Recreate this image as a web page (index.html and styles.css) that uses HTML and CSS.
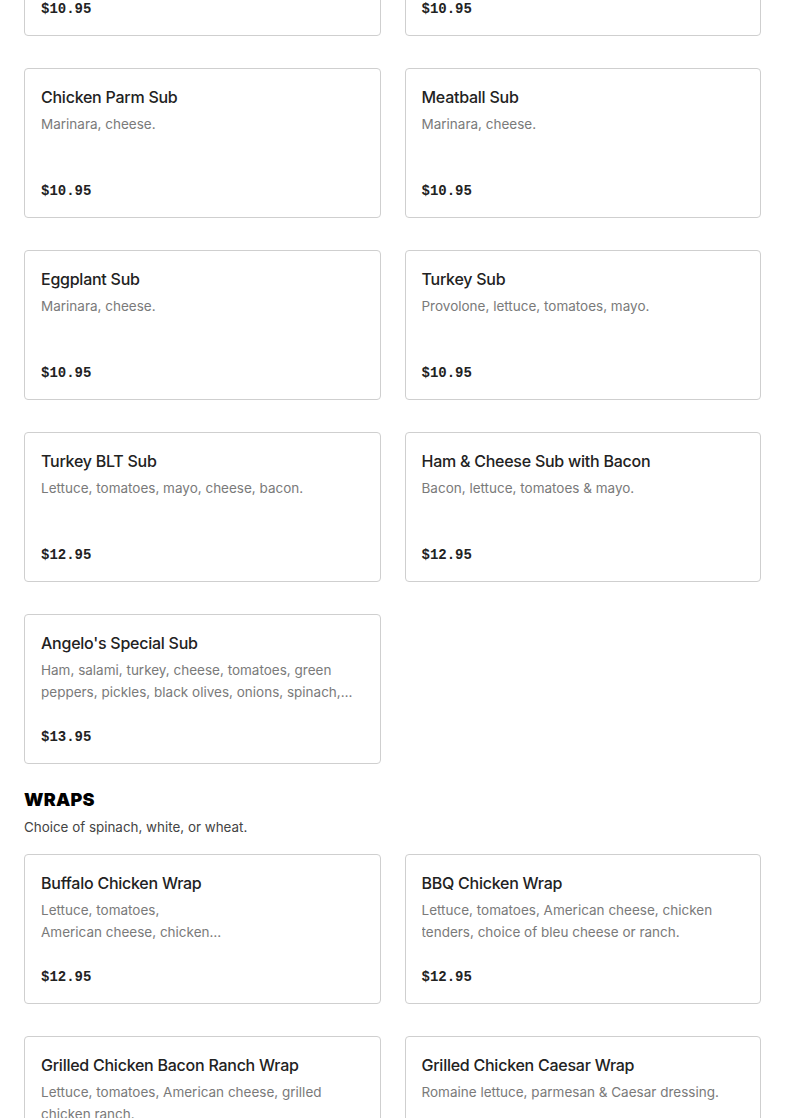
FILE: index.html
```html
<!DOCTYPE html>
<html lang="en">
<head>
<meta charset="utf-8">
<title>Menu</title>
<link rel="stylesheet" href="styles.css">
</head>
<body>
<main class="page">
  <section class="section section-subs">
    <div class="grid">
      <div class="card">
        <h3 class="card-title">Italian Sub</h3>
        <p class="card-desc">Ham, salami, provolone, lettuce, tomatoes, onions, oil &amp; vinegar.</p>
        <div class="card-price">$10.95</div>
      </div>
      <div class="card">
        <h3 class="card-title">Ham &amp; Cheese Sub</h3>
        <p class="card-desc">Lettuce, tomatoes, mayo.</p>
        <div class="card-price">$10.95</div>
      </div>
      <div class="card">
        <h3 class="card-title">Chicken Parm Sub</h3>
        <p class="card-desc">Marinara, cheese.</p>
        <div class="card-price">$10.95</div>
      </div>
      <div class="card">
        <h3 class="card-title">Meatball Sub</h3>
        <p class="card-desc">Marinara, cheese.</p>
        <div class="card-price">$10.95</div>
      </div>
      <div class="card">
        <h3 class="card-title">Eggplant Sub</h3>
        <p class="card-desc">Marinara, cheese.</p>
        <div class="card-price">$10.95</div>
      </div>
      <div class="card">
        <h3 class="card-title">Turkey Sub</h3>
        <p class="card-desc">Provolone, lettuce, tomatoes, mayo.</p>
        <div class="card-price">$10.95</div>
      </div>
      <div class="card">
        <h3 class="card-title">Turkey BLT Sub</h3>
        <p class="card-desc">Lettuce, tomatoes, mayo, cheese, bacon.</p>
        <div class="card-price">$12.95</div>
      </div>
      <div class="card">
        <h3 class="card-title">Ham &amp; Cheese Sub with Bacon</h3>
        <p class="card-desc">Bacon, lettuce, tomatoes &amp; mayo.</p>
        <div class="card-price">$12.95</div>
      </div>
      <div class="card">
        <h3 class="card-title">Angelo's Special Sub</h3>
        <p class="card-desc">Ham, salami, turkey, cheese, tomatoes, green peppers, pickles, black olives, onions, spinach, mushrooms, oil &amp; vinegar.</p>
        <div class="card-price">$13.95</div>
      </div>
    </div>
  </section>

  <section class="section section-wraps">
    <h2 class="section-title">WRAPS</h2>
    <p class="section-sub">Choice of spinach, white, or wheat.</p>
    <div class="grid">
      <div class="card">
        <h3 class="card-title">Buffalo Chicken Wrap</h3>
        <p class="card-desc">Lettuce, tomatoes,<br>American cheese, chicken…</p>
        <div class="card-price">$12.95</div>
      </div>
      <div class="card">
        <h3 class="card-title">BBQ Chicken Wrap</h3>
        <p class="card-desc">Lettuce, tomatoes, American cheese, chicken tenders, choice of bleu cheese or ranch.</p>
        <div class="card-price">$12.95</div>
      </div>
      <div class="card">
        <h3 class="card-title">Grilled Chicken Bacon Ranch Wrap</h3>
        <p class="card-desc">Lettuce, tomatoes, American cheese, grilled chicken ranch.</p>
        <div class="card-price">$12.95</div>
      </div>
      <div class="card">
        <h3 class="card-title">Grilled Chicken Caesar Wrap</h3>
        <p class="card-desc">Romaine lettuce, parmesan &amp; Caesar dressing.</p>
        <div class="card-price">$12.95</div>
      </div>
    </div>
  </section>
</main>
</body>
</html>
```

FILE: styles.css
```css
* { box-sizing: border-box; }
html, body { margin: 0; padding: 0; background: #fff; }
body {
  font-family: Inter, "Noto Sans", "Liberation Sans", sans-serif;
  color: #222;
  overflow: hidden;
}
.page {
  padding: 0 24px;
  margin-top: -114px;
}
.grid {
  display: grid;
  grid-template-columns: 1fr 1fr;
  gap: 32px 24px;
}
.card {
  height: 150px;
  border: 1px solid #cfcfcf;
  border-radius: 4px;
  padding: 16px 16px 14px;
  display: flex;
  flex-direction: column;
  background: #fff;
}
.card-title {
  margin: 0;
  font-size: 16px;
  line-height: 24px;
  font-weight: 500;
  color: #222;
  letter-spacing: -0.25px;
}
.card-desc {
  margin: 4px 0 0;
  font-size: 13.5px;
  line-height: 22px;
  color: #7a7a7a;
  display: -webkit-box;
  -webkit-line-clamp: 2;
  -webkit-box-orient: vertical;
  overflow: hidden;
}
.card-price {
  margin-top: auto;
  font-family: "Liberation Mono", "DejaVu Sans Mono", monospace;
  font-weight: 700;
  font-size: 14px;
  line-height: 24px;
  color: #222;
}
.section-wraps {
  margin-top: 24px;
}
.section-title {
  margin: 0;
  font-size: 18px;
  line-height: 24px;
  font-weight: 900;
  color: #000;
  letter-spacing: 0.2px;
}
.section-sub {
  margin: 4px 0 16px;
  font-size: 13.4px;
  line-height: 22px;
  color: #444;
}
```
